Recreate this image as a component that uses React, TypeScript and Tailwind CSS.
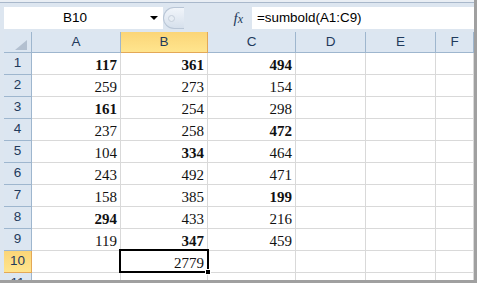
import React from "react";

type Cell = { v: string; b?: boolean };

const rows: Cell[][] = [
  [{ v: "117", b: true }, { v: "361", b: true }, { v: "494", b: true }],
  [{ v: "259" }, { v: "273" }, { v: "154" }],
  [{ v: "161", b: true }, { v: "254" }, { v: "298" }],
  [{ v: "237" }, { v: "258" }, { v: "472", b: true }],
  [{ v: "104" }, { v: "334", b: true }, { v: "464" }],
  [{ v: "243" }, { v: "492" }, { v: "471" }],
  [{ v: "158" }, { v: "385" }, { v: "199", b: true }],
  [{ v: "294", b: true }, { v: "433" }, { v: "216" }],
  [{ v: "119" }, { v: "347", b: true }, { v: "459" }],
  [{ v: "" }, { v: "2779" }, { v: "" }],
];

const cols = [
  { name: "A", w: "w-[89px]" },
  { name: "B", w: "w-[87px]" },
  { name: "C", w: "w-[88px]" },
  { name: "D", w: "w-[70px]" },
  { name: "E", w: "w-[70px]" },
  { name: "F", w: "flex-1" },
];

const sans = "font-['Liberation_Sans',Arial,sans-serif]";
const serif = "font-['Liberation_Serif','Times_New_Roman',serif]";

function FormulaBar() {
  return (
    <div className="shrink-0">
      <div className="h-[2px] bg-[#e9eef4]" />
      <div className="h-[1px] bg-[#a9b8cb]" />
      <div className="flex h-[29px] items-start bg-[#dde6f0] pt-[4px] pl-[4px]">
        <div className={`flex h-[22px] w-[159px] items-center bg-white ${sans} text-[13.5px] text-black`}>
          <span className="flex-1 pl-[2px] text-center">B10</span>
          <span className="mr-[5px] ml-[6px] h-0 w-0 border-x-[4px] border-t-[4px] border-x-transparent border-t-black" />
        </div>
        <div className="flex h-[22px] w-[21px] items-center rounded-l-full border border-r-0 border-[#b9c6d6] bg-gradient-to-b from-[#f1f5fa] to-[#d6e0ec] pl-[4px]">
          <span className="h-[7px] w-[7px] rounded-full border border-[#c5cfdb] bg-[#e7edf4]" />
        </div>
        <div className="flex h-[22px] w-[68px] items-center justify-end pr-[9px]">
          <span className={`${serif} text-[15px] italic text-[#1e395b]`}>
            f<span className="text-[12px]">x</span>
          </span>
        </div>
        <div className={`flex h-[22px] flex-1 items-center bg-white pl-[5px] ${sans} text-[13.4px] text-black`}>
          =sumbold(A1:C9)
        </div>
      </div>
    </div>
  );
}

function HeaderRow() {
  return (
    <div className="flex h-[21px] shrink-0">
      <div className="relative w-[28px] shrink-0 border-r border-b border-[#9eb6ce] bg-[#dce6f1]">
        <svg className="absolute right-[4px] bottom-[2px]" width="12" height="10" viewBox="0 0 12 10">
          <polygon points="12,0 12,10 0,10" fill="#b3c0d0" />
        </svg>
      </div>
      {cols.map((c) => (
        <div
          key={c.name}
          className={`${c.w} flex ${c.name === "F" ? "" : "shrink-0"} items-center justify-center border-r border-b ${
            c.name === "B"
              ? "border-[#e3a857] bg-gradient-to-b from-[#fbd577] to-[#ffe58e]"
              : "border-[#9eb6ce] bg-[#dce6f1]"
          } ${sans} text-[13.5px] text-[#1f3a5c]`}
        >
          {c.name}
        </div>
      ))}
    </div>
  );
}

function DataRow({ idx, cells }: { idx: number; cells: Cell[] }) {
  const selected = idx === 10;
  return (
    <div className="flex h-[22px] shrink-0">
      <div
        className={`flex w-[28px] shrink-0 items-center justify-center border-r border-b ${
          selected
            ? "border-[#e3a857] bg-gradient-to-b from-[#fbd577] to-[#ffe58e]"
            : "border-[#9eb6ce] bg-[#dce6f1]"
        } ${sans} text-[13.5px] text-[#1f3a5c]`}
      >
        {idx}
      </div>
      {cols.map((c, ci) => {
        const cell = cells[ci];
        const isSel = selected && ci === 1;
        return (
          <div
            key={c.name}
            className={`relative ${c.w} flex ${c.name === "F" ? "" : "shrink-0"} items-end justify-end border-r border-b border-[#d9d9d9] pr-[3px] ${serif} text-[15px] leading-[17px] text-[#111] ${
              cell?.b ? "font-bold" : ""
            }`}
          >
            {cell?.v}
            {isSel && (
              <>
                <span className="absolute -top-[2px] -left-[2px] -right-[2px] -bottom-[1px] z-10 border-2 border-black" />
                <span className="absolute -right-[4px] -bottom-[3px] z-20 h-[6px] w-[6px] border border-white bg-black" />
              </>
            )}
          </div>
        );
      })}
    </div>
  );
}

export default function App() {
  return (
    <div className="flex h-[283px] w-[477px] flex-col overflow-hidden bg-white">
      <div className="flex min-h-0 flex-1">
        <div className="flex min-w-0 flex-1 flex-col overflow-hidden">
          <FormulaBar />
          <div className="flex min-h-0 flex-1">
            <div className="w-[4px] shrink-0 bg-[#dde6f0]" />
            <div className="flex min-w-0 flex-1 flex-col overflow-hidden">
              <HeaderRow />
              {rows.map((r, i) => (
                <DataRow key={i} idx={i + 1} cells={r} />
              ))}
              <DataRow idx={11} cells={[]} />
            </div>
          </div>
        </div>
        <div className="w-[3px] shrink-0 bg-[#a0a0a0]" />
      </div>
      <div className="h-[3px] shrink-0 bg-[#a0a0a0]" />
    </div>
  );
}
